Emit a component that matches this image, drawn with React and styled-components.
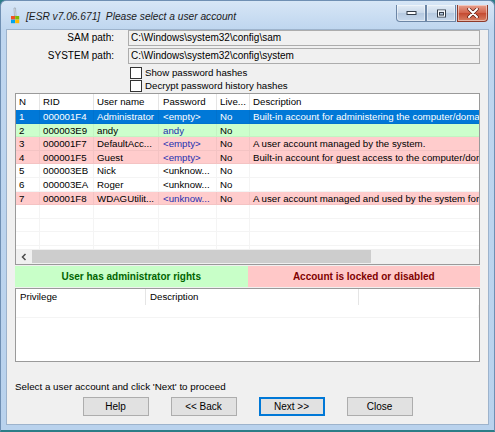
import React from 'react'
import styled, { createGlobalStyle } from 'styled-components'

const GlobalStyle = createGlobalStyle`
  html, body {
    margin: 0;
    padding: 0;
    background: #2c7d87;
  }
  body {
    font-family: "Liberation Sans", Arial, sans-serif;
    font-size: 9.7px;
    color: #000;
  }
  * { box-sizing: border-box; }
`

const Window = styled.div`
  width: 495px;
  height: 432px;
  display: flex;
  flex-direction: column;
  padding: 0 5px 5px 5px;
  border: 1px solid #6f8fb3;
  border-bottom: 2px solid #2c7d87;
  border-radius: 6px 6px 0 0;
  background: linear-gradient(to bottom, #d7e6f6 0px, #bfd6ef 28px, #b9d2ed 100%);
  overflow: hidden;
`

const TitleBar = styled.div`
  height: 28px;
  flex: none;
  display: flex;
  align-items: center;
  padding-left: 4px;
`

const TitleText = styled.span`
  font-style: italic;
  font-size: 10.2px;
  color: #1b1b1b;
  margin-left: 6px;
  margin-top: 3px;
  flex: 1;
  white-space: pre;
`

const Caption = styled.div`
  display: flex;
  align-self: flex-start;
  margin-top: 4px;
  margin-right: 1px;
`

const CaptionButton = styled.div`
  width: ${p => (p.$close ? 31 : 30)}px;
  height: 17px;
  display: flex;
  align-items: center;
  justify-content: center;
  border: 1px solid ${p => (p.$close ? '#8d3a2a' : '#6c86a6')};
  border-top: none;
  margin-left: ${p => (p.$close ? '1px' : '0')};
  border-radius: ${p => p.$r || '0'};
  background: ${p =>
    p.$close
      ? 'linear-gradient(to bottom, #e7a08d 0%, #d2634b 50%, #c44a31 51%, #d77f63 100%)'
      : 'linear-gradient(to bottom, #e3ecf6 0%, #c9d8ea 50%, #b5c9e0 51%, #c8d9ec 100%)'};
  box-shadow: inset 0 0 0 1px rgba(255, 255, 255, 0.45);
`

const Client = styled.div`
  flex: 1;
  display: flex;
  flex-direction: column;
  background: #f0f0f0;
  border: 1px solid #9db3cc;
  min-height: 0;
`

const PathGrid = styled.div`
  display: grid;
  grid-template-columns: 107px 352px;
  column-gap: 14px;
  row-gap: 2px;
`

const PathLabel = styled.div`
  height: 16px;
  line-height: 16px;
  text-align: right;
  font-size: 10px;
`

const PathInput = styled.div`
  height: 16px;
  line-height: 14px;
  border: 1px solid #acacac;
  background: #f0f0f0;
  padding-left: 2px;
  font-size: 10px;
  white-space: nowrap;
  overflow: hidden;
`

const Checks = styled.div`
  margin-top: 2px;
  padding-left: 123px;
  display: flex;
  flex-direction: column;
`

const CheckRow = styled.label`
  height: 13px;
  display: flex;
  align-items: center;
  gap: 3px;
`

const Box = styled.span`
  width: 12px;
  height: 12px;
  border: 1px solid #333;
  background: #fff;
`

const Section = styled.div`
  flex: none;
  margin: ${p => p.$top || 1}px 8px 0 8px;
`

const ListBox = styled.div`
  display: grid;
  grid-template-rows: ${p => p.$rows};
  border: 1px solid #9a9a9a;
  background: #fff;
  overflow: hidden;
`

const Row = styled.div`
  display: grid;
  grid-template-columns: ${p => p.$cols};
  height: ${p => p.$h}px;
  line-height: ${p => p.$h}px;
  background: ${p => p.$bg || 'transparent'};
  color: ${p => p.$fg || '#000'};
  flex: none;
  white-space: nowrap;
`

const HeadCell = styled.div`
  padding-left: ${p => p.$pad ?? 3}px;
  border-right: 1px solid ${p => (p.$noLine ? 'transparent' : '#e5e5e5')};
  overflow: hidden;
`

const Cell = styled.div`
  padding-left: ${p => p.$pad ?? 3}px;
  border-right: 1px solid rgba(0, 0, 0, 0.045);
  border-bottom: 1px solid rgba(0, 0, 0, 0.045);
  overflow: hidden;
  color: ${p => p.$fg || 'inherit'};
`

const RowsArea = styled.div`
  min-height: 0;
  overflow: hidden;
  display: flex;
  flex-direction: column;
`

const HScroll = styled.div`
  display: grid;
  grid-template-columns: 16px 1fr 16px;
  background: #f0f0f0;
`

const ArrowBtn = styled.div`
  display: flex;
  align-items: center;
  justify-content: center;
`

const Track = styled.div`
  display: flex;
  padding: 1px 0;
`

const Thumb = styled.div`
  width: 339px;
  background: #cdcdcd;
`

const StatusBar = styled.div`
  display: flex;
  height: 21px;
`

const Flag = styled.div`
  flex: 1;
  display: flex;
  align-items: center;
  justify-content: center;
  font-weight: bold;
  font-size: 10px;
  background: ${p => p.$bg};
  color: ${p => p.$fg};
`

const Hint = styled.div`
  margin: 19px 0 0 8px;
  height: 12px;
  line-height: 12px;
  font-size: 9.8px;
`

const Buttons = styled.div`
  margin-top: 4px;
  display: flex;
  justify-content: center;
  gap: 22px;
`

const Button = styled.button`
  width: 66px;
  height: 19px;
  padding: 0;
  font-family: inherit;
  font-size: 10px;
  color: #000;
  background: #e1e1e1;
  border: 1px solid ${p => (p.$default ? '#0078d7' : '#adadad')};
  box-shadow: ${p => (p.$default ? 'inset 0 0 0 1px #0078d7' : 'none')};
`

const COLS = '24px 54px 65px 58px 33px 420px'
const PRIV_COLS = '130px 213px 1fr'

const users = [
  { n: 1, rid: '000001F4', user: 'Administrator', pass: '<empty>', desc: 'Built-in account for administering the computer/domain', kind: 'selected' },
  { n: 2, rid: '000003E9', user: 'andy', pass: 'andy', desc: '', kind: 'admin' },
  { n: 3, rid: '000001F7', user: 'DefaultAcc...', pass: '<empty>', desc: 'A user account managed by the system.', kind: 'locked' },
  { n: 4, rid: '000001F5', user: 'Guest', pass: '<empty>', desc: 'Built-in account for guest access to the computer/domain', kind: 'locked' },
  { n: 5, rid: '000003EB', user: 'Nick', pass: '<unknow...', desc: '', kind: 'normal' },
  { n: 6, rid: '000003EA', user: 'Roger', pass: '<unknow...', desc: '', kind: 'normal' },
  { n: 7, rid: '000001F8', user: 'WDAGUtilit...', pass: '<unknow...', desc: 'A user account managed and used by the system for Windows Defender Application Guard scenarios.', kind: 'locked' },
]

const rowColors = {
  selected: { bg: '#0078d7', fg: '#fff' },
  admin: { bg: '#ccffcc', fg: '#000' },
  locked: { bg: '#ffcccc', fg: '#000' },
  normal: { bg: 'transparent', fg: '#000' },
}

const AppIcon = () => (
  <svg width="10" height="17" viewBox="0 0 10 17">
    <path d="M4 1 L5.5 1 L6 9 L4.5 9 Z" fill="#e8ecf0" stroke="#8c98a6" strokeWidth="0.6" />
    <rect x="1" y="9" width="4" height="3.5" fill="#f25022" />
    <rect x="5.2" y="9" width="4" height="3.5" fill="#7fba00" />
    <rect x="1" y="12.7" width="4" height="3.5" fill="#00a4ef" />
    <rect x="5.2" y="12.7" width="4" height="3.5" fill="#ffb900" />
  </svg>
)

const Chevron = ({ dir }) => (
  <svg width="6" height="8" viewBox="0 0 6 8">
    <path
      d={dir === 'left' ? 'M4.5 1 L1.5 4 L4.5 7' : 'M1.5 1 L4.5 4 L1.5 7'}
      fill="none"
      stroke="#4a4a4a"
      strokeWidth="1.5"
    />
  </svg>
)

const MinIcon = () => (
  <svg width="11" height="6" viewBox="0 0 11 6">
    <rect x="1" y="1.5" width="9" height="3" fill="#fff" stroke="#333c48" strokeWidth="1" />
  </svg>
)

const MaxIcon = () => (
  <svg width="11" height="9" viewBox="0 0 11 9">
    <rect x="1.5" y="1" width="8" height="7" fill="none" stroke="#333c48" strokeWidth="1" />
    <rect x="2.5" y="2" width="6" height="5" fill="none" stroke="#fff" strokeWidth="1" />
    <rect x="3.5" y="3.5" width="4" height="2.5" fill="none" stroke="#333c48" strokeWidth="1" />
  </svg>
)

const CloseIcon = () => (
  <svg width="12" height="10" viewBox="0 0 12 10">
    <path d="M2 1 L10 9 M10 1 L2 9" stroke="#5a1d12" strokeWidth="3.4" strokeLinecap="round" />
    <path d="M2 1 L10 9 M10 1 L2 9" stroke="#fff" strokeWidth="2" strokeLinecap="round" />
  </svg>
)

export default function App() {
  return (
    <>
      <GlobalStyle />
      <Window>
        <TitleBar>
          <AppIcon />
          <TitleText>[ESR v7.06.671]  Please select a user account</TitleText>
          <Caption>
            <CaptionButton $r="0 0 0 4px">
              <MinIcon />
            </CaptionButton>
            <CaptionButton>
              <MaxIcon />
            </CaptionButton>
            <CaptionButton $close $r="0 0 4px 0">
              <CloseIcon />
            </CaptionButton>
          </Caption>
        </TitleBar>
        <Client>
          <PathGrid>
            <PathLabel>SAM path:</PathLabel>
            <PathInput>C:\Windows\system32\config\sam</PathInput>
            <PathLabel>SYSTEM path:</PathLabel>
            <PathInput>C:\Windows\system32\config\system</PathInput>
          </PathGrid>
          <Checks>
            <CheckRow>
              <Box />
              Show password hashes
            </CheckRow>
            <CheckRow>
              <Box />
              Decrypt password history hashes
            </CheckRow>
          </Checks>

          <Section $top={1}>
            <ListBox $rows="16px 139px 15px">
              <Row $cols={COLS} $h={16}>
                <HeadCell>N</HeadCell>
                <HeadCell>RID</HeadCell>
                <HeadCell>User name</HeadCell>
                <HeadCell $pad={4}>Password</HeadCell>
                <HeadCell>Live...</HeadCell>
                <HeadCell $noLine>Description</HeadCell>
              </Row>
              <RowsArea>
                {users.map(u => {
                  const c = rowColors[u.kind]
                  const passColor =
                    u.kind === 'admin' || u.kind === 'locked' ? '#1f2fb0' : undefined
                  return (
                    <Row key={u.n} $cols={COLS} $h={13.6} $bg={c.bg} $fg={c.fg}>
                      <Cell>{u.n}</Cell>
                      <Cell>{u.rid}</Cell>
                      <Cell>{u.user}</Cell>
                      <Cell $pad={4} $fg={passColor}>{u.pass}</Cell>
                      <Cell>No</Cell>
                      <Cell>{u.desc}</Cell>
                    </Row>
                  )
                })}
                {Array.from({ length: 4 }).map((_, i) => (
                  <Row key={'e' + i} $cols={COLS} $h={13.6}>
                    <Cell />
                    <Cell />
                    <Cell />
                    <Cell />
                    <Cell />
                    <Cell />
                  </Row>
                ))}
              </RowsArea>
              <HScroll>
                <ArrowBtn>
                  <Chevron dir="left" />
                </ArrowBtn>
                <Track>
                  <Thumb />
                </Track>
                <ArrowBtn>
                  <Chevron dir="right" />
                </ArrowBtn>
              </HScroll>
            </ListBox>
          </Section>

          <Section $top={1}>
            <StatusBar>
              <Flag $bg="#c8ffc8" $fg="#006400">User has administrator rights</Flag>
              <Flag $bg="#ffc8c8" $fg="#800000">Account is locked or disabled</Flag>
            </StatusBar>
          </Section>

          <Section $top={1}>
            <ListBox $rows="16px 56px">
              <Row $cols={PRIV_COLS} $h={16}>
                <HeadCell $pad={4}>Privilege</HeadCell>
                <HeadCell $pad={4}>Description</HeadCell>
                <HeadCell $noLine />
              </Row>
              <RowsArea>
                <Row $cols="1fr" $h={13}>
                  <Cell />
                </Row>
              </RowsArea>
            </ListBox>
          </Section>

          <Hint>Select a user account and click 'Next' to proceed</Hint>
          <Buttons>
            <Button>Help</Button>
            <Button>&lt;&lt; Back</Button>
            <Button $default>Next &gt;&gt;</Button>
            <Button>Close</Button>
          </Buttons>
        </Client>
      </Window>
    </>
  )
}
